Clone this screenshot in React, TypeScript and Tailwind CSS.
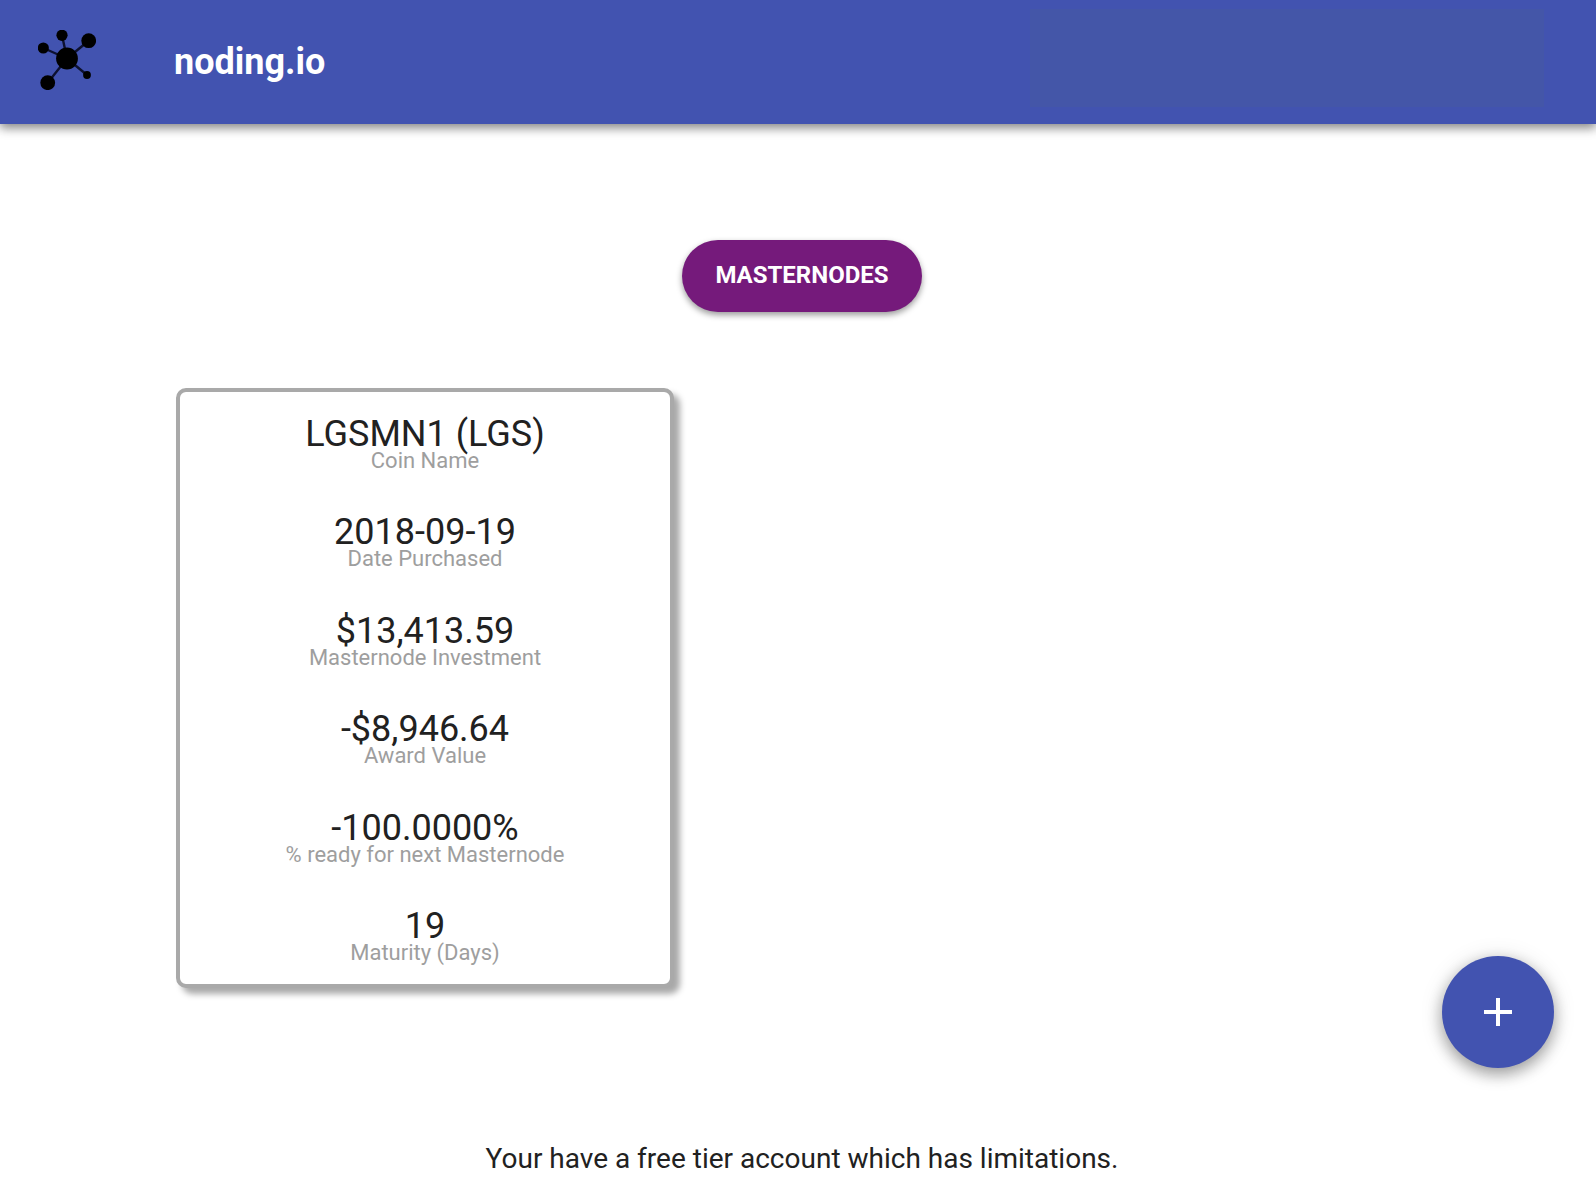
interface Stat {
	label: string;
	value: string;
}

const stats: Stat[] = [
	{ label: "Coin Name", value: "LGSMN1 (LGS)" },
	{ label: "Date Purchased", value: "2018-09-19" },
	{ label: "Masternode Investment", value: "$13,413.59" },
	{ label: "Award Value", value: "-$8,946.64" },
	{ label: "% ready for next Masternode", value: "-100.0000%" },
	{ label: "Maturity (Days)", value: "19" },
];

function Logo() {
	return (
		<svg width="58" height="60" viewBox="0 0 58 60" aria-hidden="true">
			<g stroke="#0d1130" strokeWidth="2.4">
				<path d="M29 28.5 24 5.3M29 28.5 5.3 18M29 28.5 50.7 10.7M29 28.5 9.7 52.7M29 28.5 49 45" />
			</g>
			<circle cx="29" cy="28.5" r="10.9" />
			<circle cx="24" cy="5.3" r="5.6" />
			<circle cx="5.3" cy="18" r="5.6" />
			<circle cx="50.7" cy="10.7" r="7.4" />
			<circle cx="9.7" cy="52.7" r="7.4" />
			<circle cx="49" cy="45" r="3.9" />
		</svg>
	);
}

function Header() {
	return (
		<header className="flex h-31 items-center bg-[#4253b0] pl-[38px] pr-[52px] text-white shadow-[0_4px_10px_rgba(0,0,0,0.4),0_2px_10px_rgba(0,0,0,0.15)]">
			<a href="#" aria-label="Home" className="pb-1">
				<Logo />
			</a>
			<h1 className="ml-[78px] text-[36px] leading-10 font-bold">noding.io</h1>
			{/* Account area */}
			<div className="mb-2 ml-auto h-[98px] w-[514px] bg-[#4456a8]" />
		</header>
	);
}

function NodeCard() {
	return (
		<dl className="flex min-h-[600px] w-[498px] flex-col justify-between rounded-[10px] border-4 border-[#a9a9a9] bg-white pt-6 pb-[22px] text-center shadow-[6px_6px_6px_#a9a9a9]">
			{stats.map((stat) => (
				<div key={stat.label} className="flex flex-col-reverse">
					<dt className="text-[22px] leading-[18px] text-[#9e9e9e]">{stat.label}</dt>
					<dd className="text-[36px] leading-9">{stat.value}</dd>
				</div>
			))}
		</dl>
	);
}

export default function App() {
	return (
		<div className="min-h-screen bg-white font-['Roboto',sans-serif] text-[#212121]">
			<Header />

			<main className="pt-29 pr-42 pl-44">
				<div className="flex justify-center">
					<button
						type="button"
						className="h-18 w-60 rounded-full bg-[#751a7b] pb-0.5 text-[24px] font-bold text-white uppercase shadow-[0_3px_6px_rgba(0,0,0,0.4)]"
					>
						Masternodes
					</button>
				</div>

				<div className="mt-19">
					<NodeCard />
				</div>

				<p className="mt-[151px] text-center text-[28px] leading-10">
					Your have a free tier account which has limitations.
				</p>
			</main>

			<button
				type="button"
				aria-label="Add masternode"
				className="fixed right-[42px] bottom-[134px] flex size-28 items-center justify-center rounded-full bg-[#4253b0] text-white shadow-[0_6px_16px_rgba(0,0,0,0.35),0_2px_24px_rgba(0,0,0,0.12)]"
			>
				<svg width="28" height="28" viewBox="0 0 28 28" fill="currentColor" aria-hidden="true">
					<path d="M12 0h4v12h12v4H16v12h-4V16H0v-4h12z" />
				</svg>
			</button>
		</div>
	);
}
